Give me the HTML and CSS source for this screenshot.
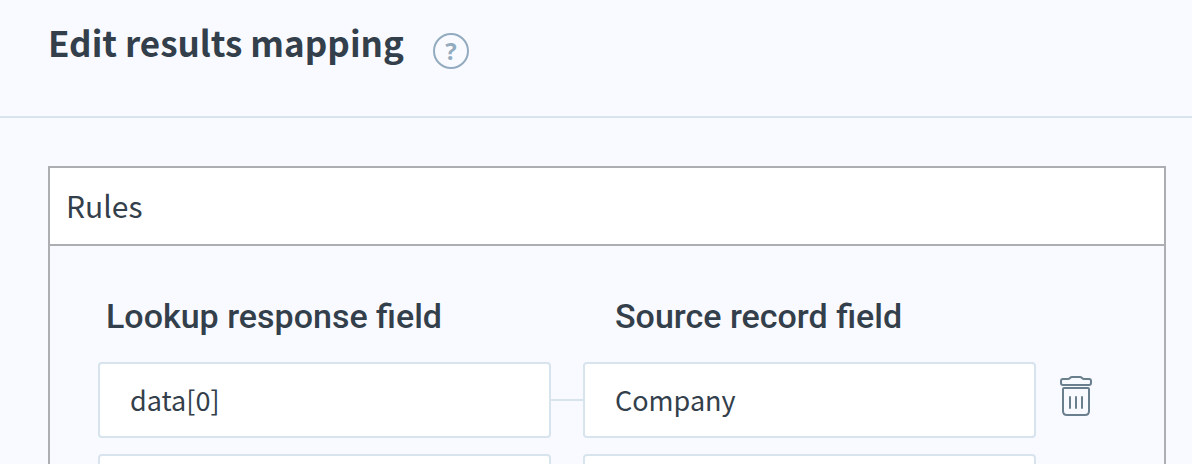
FILE: index.html
```html
<!DOCTYPE html>
<html lang="en">
<head>
    <meta charset="UTF-8">
    <meta name="viewport" content="width=device-width, initial-scale=1.0">
    <title>Edit results mapping</title>
    <link rel="stylesheet" href="styles.css">
</head>
<body>
    <header class="page-header">
        <h1>Edit results mapping</h1>
        <button type="button" class="help" aria-label="Help">?</button>
    </header>

    <main class="content">
        <section class="panel">
            <h2 class="panel-title">Rules</h2>
            <form class="rules">
                <div class="rule-row labels">
                    <label for="lookup0">Lookup response field</label>
                    <label for="source0">Source record field</label>
                </div>
                <div class="rule-row">
                    <input type="text" id="lookup0" value="data[0]">
                    <span class="connector"></span>
                    <input type="text" id="source0" value="Company">
                    <button type="button" class="delete" aria-label="Delete rule">
                        <svg width="32" height="42" viewBox="0 0 32 42">
                            <path d="M3 4h5c2 0 2-2 4-2h8c2 0 2 2 4 2h5q2 0 2 2v2q0 2-2 2H3q-2 0-2-2V6q0-2 2-2z"/>
                            <path d="M4 13h24q1 0 1 1v22q0 4-4 4H7q-4 0-4-4V14q0-1 1-1z"/>
                            <path d="M10 22v11M16 22v11M22 22v11"/>
                        </svg>
                    </button>
                </div>
                <div class="rule-row">
                    <input type="text" id="lookup1" aria-label="Lookup response field">
                    <span class="connector"></span>
                    <input type="text" id="source1" aria-label="Source record field">
                    <button type="button" class="delete" aria-label="Delete rule">
                        <svg width="32" height="42" viewBox="0 0 32 42">
                            <path d="M3 4h5c2 0 2-2 4-2h8c2 0 2 2 4 2h5q2 0 2 2v2q0 2-2 2H3q-2 0-2-2V6q0-2 2-2z"/>
                            <path d="M4 13h24q1 0 1 1v22q0 4-4 4H7q-4 0-4-4V14q0-1 1-1z"/>
                            <path d="M10 22v11M16 22v11M22 22v11"/>
                        </svg>
                    </button>
                </div>
            </form>
        </section>
    </main>
</body>
</html>
```
FILE: styles.css
```css
* {
    box-sizing: border-box;
}
html {
    scrollbar-width: none;
}
body {
    margin: 0;
    background-color: #f9faff;
    color: #33404b;
    font-family: "Noto Sans CJK JP", "Open Sans", sans-serif;
}
.page-header {
    display: flex;
    align-items: flex-start;
    gap: 29px;
    padding: 13px 48px 45px;
    border-bottom: 2px solid #d7e4ed;
}
h1 {
    margin: 0;
    font-size: 35px;
    line-height: 58px;
    font-weight: bold;
}
.help {
    width: 36px;
    height: 36px;
    margin-top: 20px;
    padding: 0;
    border: 2px solid #93abbf;
    border-radius: 50%;
    background: none;
    color: #93abbf;
    font-family: "Open Sans", sans-serif;
    font-size: 24px;
    line-height: 32px;
    font-weight: bold;
}
.content {
    padding: 48px 26px 48px 48px;
}
.panel {
    border: 2px solid #acaeb2;
}
.panel-title {
    margin: 0;
    padding: 13px 16px 15px;
    border-bottom: 2px solid #acaeb2;
    background-color: #fff;
    font-size: 30px;
    line-height: 48px;
    font-weight: normal;
}
.rules {
    display: flex;
    flex-direction: column;
    gap: 16px;
    padding: 44px 72px 48px 48px;
}
.rule-row {
    display: grid;
    grid-template-columns: 1fr 32px 1fr 56px;
    align-items: center;
}
.labels {
    padding-bottom: 4px;
    font-family: Roboto, sans-serif;
    font-size: 34px;
    line-height: 52px;
    font-weight: 500;
}
.labels label:first-child {
    grid-column: 1;
    padding-left: 8px;
}
.labels label:last-child {
    grid-column: 3;
    padding-left: 32px;
}
.rule-row input {
    width: 100%;
    height: 76px;
    padding: 0 30px 2px;
    border: 2px solid #d7e4ed;
    border-radius: 4px;
    background-color: #fff;
    color: inherit;
    font-family: inherit;
    font-size: 27px;
}
.connector {
    height: 2px;
    background-color: #d7e4ed;
}
.delete {
    justify-self: end;
    align-self: start;
    width: 32px;
    height: 42px;
    margin-top: 13px;
    padding: 0;
    border: none;
    background: none;
}
.delete svg {
    display: block;
    fill: none;
    stroke: #6a7f8e;
    stroke-width: 2;
    stroke-linejoin: round;
    stroke-linecap: round;
}
```
